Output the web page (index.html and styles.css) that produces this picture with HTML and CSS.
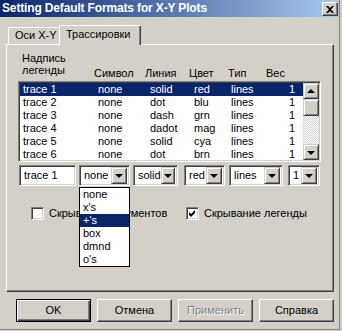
FILE: index.html
```html
<!doctype html>
<html lang="ru">
<head>
<meta charset="utf-8">
<title>Setting Default Formats for X-Y Plots</title>
<link rel="stylesheet" href="styles.css">
</head>
<body>

<div class="window">
	<header class="titlebar">
		<span class="title">Setting Default Formats for X-Y Plots</span>
		<span class="close">
			<svg width="8" height="7" viewBox="0 0 8 7"><path d="M0 0h2l2 2 2-2h2L5 3.5 8 7H6L4 5 2 7H0l3-3.5z"/></svg>
		</span>
	</header>

	<nav class="tabs">
		<span class="tab">Оси X-Y</span>
		<span class="tab active">Трассировки</span>
	</nav>

	<section class="panel">
		<div class="heads">
			<span class="first">Надпись<br>легенды</span>
			<span>Символ</span>
			<span>Линия</span>
			<span>Цвет</span>
			<span>Тип</span>
			<span>Вес</span>
		</div>

		<div class="listbox">
			<div class="rows">
				<div class="row selected"><span>trace 1</span><span>none</span><span>solid</span><span>red</span><span>lines</span><span class="num">1</span></div>
				<div class="row"><span>trace 2</span><span>none</span><span>dot</span><span>blu</span><span>lines</span><span class="num">1</span></div>
				<div class="row"><span>trace 3</span><span>none</span><span>dash</span><span>grn</span><span>lines</span><span class="num">1</span></div>
				<div class="row"><span>trace 4</span><span>none</span><span>dadot</span><span>mag</span><span>lines</span><span class="num">1</span></div>
				<div class="row"><span>trace 5</span><span>none</span><span>solid</span><span>cya</span><span>lines</span><span class="num">1</span></div>
				<div class="row"><span>trace 6</span><span>none</span><span>dot</span><span>brn</span><span>lines</span><span class="num">1</span></div>
			</div>
			<div class="vscroll">
				<span class="sbtn"><i class="arrow up"></i></span>
				<span class="thumb"></span>
				<span class="track"></span>
				<span class="sbtn"><i class="arrow"></i></span>
			</div>
		</div>

		<div class="edits">
			<span class="field text">trace 1</span>
			<span class="field combo c-sym">none<b class="drop"><i class="arrow"></i></b></span>
			<span class="field combo c-line">solid<b class="drop"><i class="arrow"></i></b></span>
			<span class="field combo c-color">red<b class="drop"><i class="arrow"></i></b></span>
			<span class="field combo c-type">lines<b class="drop"><i class="arrow"></i></b></span>
			<span class="field combo c-weight">1<b class="drop"><i class="arrow"></i></b></span>
		</div>

		<div class="checks">
			<label class="check first"><span class="box"></span>Скрывание аргументов</label>
			<label class="check"><span class="box">
				<svg width="7" height="7" viewBox="0 0 7 7"><path d="M0 2l2 2 4-4v3L2 7 0 5z"/></svg>
			</span>Скрывание легенды</label>
		</div>

		<ul class="droplist">
			<li>none</li>
			<li>x's</li>
			<li class="selected">+'s</li>
			<li>box</li>
			<li>dmnd</li>
			<li>o's</li>
		</ul>
	</section>

	<footer class="buttons">
		<span class="btn default">OK</span>
		<span class="btn">Отмена</span>
		<span class="btn disabled">Применить</span>
		<span class="btn">Справка</span>
	</footer>
</div>

</body>
</html>
```

FILE: styles.css
```css
* {
	box-sizing: border-box;
}
body {
	margin: 0;
	width: 342px;
	height: 331px;
	overflow: hidden;
	background: #d4d0c8;
	color: #000;
	font: 11px/13px "Liberation Sans", Arial, sans-serif;
}
.window {
	width: 340px;
	height: 330px;
	border-right: 1px solid #808080;
	border-bottom: 1px solid #808080;
}

/* title bar */
.titlebar {
	display: flex;
	justify-content: space-between;
	align-items: flex-start;
	height: 17px;
	padding: 0 1px 0 2px;
	background: linear-gradient(to right, #0a246a, #a6caf0);
}
.title {
	color: #fff;
	font-weight: bold;
	font-size: 12px;
	line-height: 17px;
	letter-spacing: -0.15px;
}
.close {
	display: flex;
	align-items: center;
	justify-content: center;
	width: 16px;
	height: 14px;
	margin-top: 2px;
	background: #d4d0c8;
	border: 1px solid;
	border-color: #fff #404040 #404040 #fff;
	box-shadow: inset -1px -1px #808080;
}

/* tabs */
.tabs {
	display: flex;
	align-items: flex-end;
	height: 27px;
	padding-left: 8px;
}
.tab {
	width: 51px;
	height: 17px;
	padding: 1px 0 0 6px;
	border: 1px solid #fff;
	border-bottom: none;
	border-right: none;
	border-radius: 2px 2px 0 0;
	white-space: nowrap;
}
.tab.active {
	position: relative;
	z-index: 1;
	width: 82px;
	height: 20px;
	margin-bottom: -1px;
	padding-top: 2px;
	background: #d4d0c8;
	border-right: 1px solid #404040;
	box-shadow: inset -1px 0 #808080;
}

/* panel */
.panel {
	position: relative;
	width: 328px;
	height: 248px;
	margin-left: 6px;
	border: 1px solid;
	border-color: #fff #404040 #404040 #fff;
	box-shadow: inset -1px -1px #808080;
}
.heads {
	display: grid;
	grid-template-columns: 72px 51px 44px 39px 38px auto;
	height: 27px;
	margin-top: 7px;
	padding-left: 15px;
	line-height: 12px;
}
.heads span {
	padding-top: 15px;
}
.heads .first {
	padding-top: 0;
}

.listbox {
	display: flex;
	width: 303px;
	height: 81px;
	margin: 2px 0 0 11px;
	background: #fff;
	border: 1px solid;
	border-color: #808080 #fff #fff #808080;
	box-shadow: inset 1px 1px #404040, inset -1px -1px #d4d0c8;
	padding: 1px;
}
.rows {
	flex: 1;
	overflow: hidden;
}
.row {
	display: grid;
	grid-template-columns: 78px 52px 44px 37px 44px 20px;
	height: 13px;
	white-space: nowrap;
}
.row span:first-child {
	padding-left: 3px;
}
.row .num {
	text-align: right;
}
.row.selected {
	background: #0a246a;
	color: #fff;
}

.vscroll {
	display: flex;
	flex-direction: column;
	width: 16px;
}
.sbtn, .thumb, .drop {
	display: flex;
	align-items: center;
	justify-content: center;
	background: #d4d0c8;
	border: 1px solid;
	border-color: #d4d0c8 #404040 #404040 #d4d0c8;
	box-shadow: inset 1px 1px #fff, inset -1px -1px #808080;
}
.sbtn {
	height: 16px;
}
.thumb {
	height: 17px;
}
.track {
	flex: 1;
	background: repeating-conic-gradient(#d4d0c8 0 25%, #fff 0 50%) 0 0 / 2px 2px;
}
.arrow {
	width: 0;
	height: 0;
	border-left: 4px solid transparent;
	border-right: 4px solid transparent;
	border-top: 4px solid #000;
	margin-top: 1px;
}
.arrow.up {
	border-top: none;
	border-bottom: 4px solid #000;
	margin: 0 0 1px;
}

/* edit row */
.edits {
	display: flex;
	margin: 3px 0 0 12px;
}
.field {
	display: flex;
	align-items: center;
	justify-content: space-between;
	height: 21px;
	padding: 2px 2px 2px 4px;
	background: #fff;
	border: 1px solid;
	border-color: #808080 #fff #fff #808080;
	box-shadow: inset 1px 1px #404040, inset -1px -1px #d4d0c8;
}
.field.text {
	width: 57px;
	margin-right: 3px;
}
.drop {
	width: 16px;
	height: 17px;
	font-weight: normal;
}
.c-sym {
	width: 51px;
	margin-right: 3px;
}
.c-line {
	width: 45px;
	margin-right: 6px;
}
.c-color {
	width: 41px;
	margin-right: 4px;
}
.c-type {
	width: 54px;
	margin-right: 5px;
}
.c-weight {
	width: 32px;
}

/* checkboxes */
.checks {
	display: flex;
	margin: 21px 0 0 24px;
}
.check {
	display: flex;
	align-items: center;
	gap: 5px;
	height: 13px;
}
.check.first {
	width: 155px;
}
.box {
	display: flex;
	align-items: center;
	justify-content: center;
	width: 13px;
	height: 13px;
	background: #fff;
	border: 1px solid;
	border-color: #808080 #fff #fff #808080;
	box-shadow: inset 1px 1px #404040, inset -1px -1px #d4d0c8;
}

/* open combo list */
.droplist {
	position: absolute;
	left: 72px;
	top: 142px;
	width: 51px;
	margin: 0;
	padding: 0;
	list-style: none;
	background: #fff;
	border: 1px solid #000;
}
.droplist li {
	height: 13px;
	padding-left: 3px;
}
.droplist .selected {
	background: #0a246a;
	color: #fff;
}

/* buttons */
.buttons {
	display: flex;
	gap: 6px;
	margin: 7px 0 0 16px;
}
.btn {
	display: flex;
	align-items: center;
	justify-content: center;
	width: 75px;
	height: 23px;
	border: 1px solid;
	border-color: #fff #404040 #404040 #fff;
	box-shadow: inset -1px -1px #808080;
}
.btn.default {
	border-color: #000;
	box-shadow: inset 1px 1px #fff, inset -1px -1px #404040, inset -2px -2px #808080;
}
.btn.disabled {
	color: #808080;
	text-shadow: 1px 1px #fff;
}
```
